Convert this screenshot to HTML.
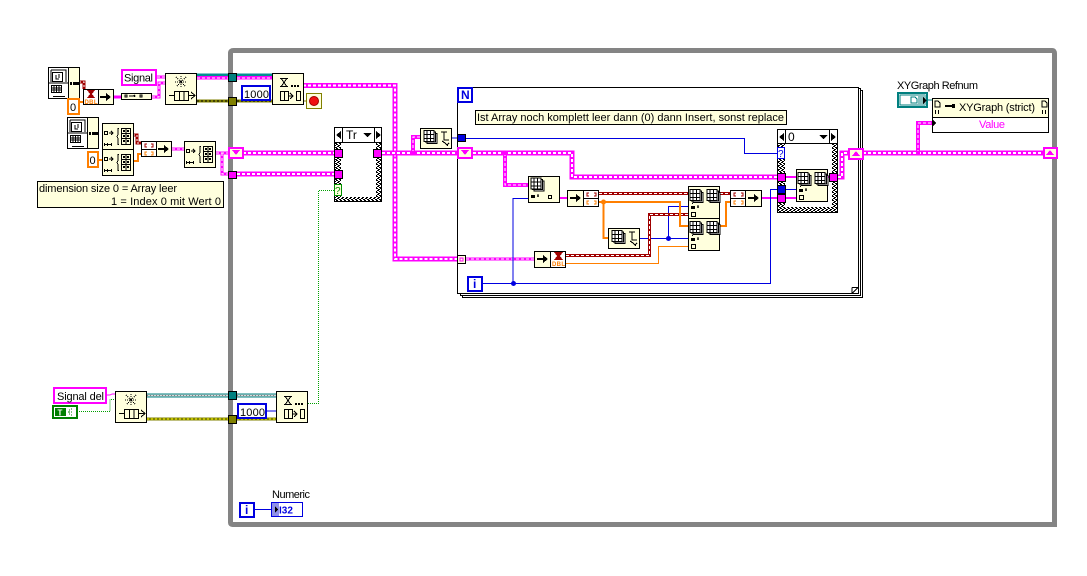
<!DOCTYPE html>
<html><head><meta charset="utf-8"><title>Block Diagram</title>
<style>
html,body{margin:0;padding:0;background:#fff;width:1087px;height:576px;overflow:hidden}
svg{display:block}
text{font-family:"Liberation Sans",sans-serif;font-size:11px;fill:#000}
.n{fill:#ffffdd;stroke:#000;stroke-width:1}
.pk{fill:none;stroke:#ff00ff;stroke-width:5}
.pw{fill:none;stroke:#fff;stroke-width:2;stroke-dasharray:3 2}
.pt{fill:none;stroke:#fff;stroke-width:1;stroke-dasharray:3 2}
.bl{fill:none;stroke:#0000e0;stroke-width:1}
.ot{fill:none;stroke:#ff7f00;stroke-width:1}
.oT{fill:none;stroke:#ff7f00;stroke-width:2}
.rd{fill:none;stroke:#a00000;stroke-width:3}
.rw{fill:none;stroke:#fff;stroke-width:1;stroke-dasharray:3 2}
.ic{fill:none;stroke:#000;stroke-width:1}
</style></head><body>
<svg width="1087" height="576" viewBox="0 0 1087 576" xmlns="http://www.w3.org/2000/svg" shape-rendering="crispEdges">
<defs>
<pattern id="chk" width="4" height="4" patternUnits="userSpaceOnUse"><rect width="4" height="4" fill="#fff"/><rect width="2" height="1" fill="#000"/><rect x="2" y="1" width="2" height="1" fill="#000"/><rect x="1" y="2" width="2" height="1" fill="#000"/><rect x="0" y="3" width="1" height="1" fill="#000"/><rect x="3" y="3" width="1" height="1" fill="#000"/></pattern>
<g id="pc"><rect x=".5" y=".5" width="31" height="31" class="n"/><path d="M1 1h19v30H1z" fill="#fff"/><path class="ic" d="M20.500 .5V31.500M3 3h15v12M3 3v12M1 16h19M5 29.500h12"/><rect x="4.500" y="5.500" width="10" height="9" fill="#fff" stroke="#000"/><path class="ic" d="M8 8v4h3M11 7v4"/><path class="ic" d="M3.500 18.500h10v7h-10zM3.500 21h10M3.500 23h10M6 18.500v7M8.500 18.500v7M11 18.500v7"/><path d="M22 15h2v3h-2zM25 15h6v3h-6z" fill="#000"/></g>
<g id="q"><rect x=".5" y=".5" width="31" height="31" class="n"/><path stroke-dasharray="1 1" class="ic" d="M16 3v12M10 9h12M11 4l10 10M21 4l-10 10"/><path class="ic" d="M4 22.500h6M24 22.500h5M26 19l4 3.500-4 3.500"/><path class="ic" d="M9.500 18.500h14v9h-14zM14.500 18.500v9M19 18.500v9"/></g>
<g id="dq"><rect x=".5" y=".5" width="31" height="31" class="n"/><path class="ic" d="M8 5.500h8M8 13.500h8M9.500 6l5 7M14.500 6l-5 7"/><path d="M19 12h2v2h-2zM22 12h2v2h-2zM25 12h2v2h-2z" fill="#000"/><path class="ic" d="M8.500 18.500h8v9h-8zM12.500 18.500v9M17 23h3M18 20l3 3-3 3M24.500 18.500h4v9h-4z"/></g>
<g id="ar"><rect x=".5" y=".5" width="31" height="26" class="n"/><rect x="2.500" y="8.500" width="3" height="3" fill="none" stroke="#000"/><path d="M7 10h3M9 8l2 2-2 2" fill="none" stroke="#000"/><path class="ic" d="M2 21.500h8M2.500 20v3M5.500 20v3M9.500 20v3M17 5.500h-1v6l-1 2 1 2v6h1"/><path class="ic" d="M19.500 5.500h9v16h-9zM19.500 10.500h9M19.500 15.500h9M24 5.500v16"/><rect x="21" y="7" width="2" height="2"/><rect x="25" y="7" width="2" height="2"/><rect x="21" y="12" width="2" height="2"/><rect x="25" y="12" width="2" height="2"/><rect x="21" y="17" width="2" height="2"/><rect x="25" y="17" width="2" height="2"/></g>
<g id="grid"><path d="M5 3h10v10H5z" fill="#fff" stroke="#000" transform="translate(3 3)"/><path d="M5 3h10v10H5z" fill="#fff" stroke="#000" transform="translate(1.500 1.500)"/><path d="M5 3h10v11H5zM5 7h10M5 11h10M8 3v11M11.500 3v11" fill="#fff" stroke="#000"/></g>
<g id="rep"><rect x=".5" y=".5" width="31" height="32" class="n"/><use href="#grid" transform="translate(-3 .5)"/><use href="#grid" transform="translate(14 .5)"/><rect x="3" y="20" width="4" height="3"/><path d="M9 21h2M10 19v3" stroke="#000" fill="none"/><rect x="3.500" y="26.500" width="4" height="4" fill="none" stroke="#000"/><rect x="4" y="17" width="1" height="1"/></g>
<g id="wave"><rect x=".5" y=".5" width="31" height="20" class="n"/><use href="#grid" transform="translate(-1 -.5)"/><path class="ic" d="M21 4h6M24 4v8h5M22 13l3 2 3 3M27 17l2-2" /></g>
<g id="ins"><rect x=".5" y=".5" width="31" height="26" class="n"/><use href="#grid" transform="translate(-2 -1)"/><rect x="3" y="19" width="4" height="3"/><path stroke="#000" fill="none" d="M9 20h2M10 18v3"/><rect x="20.500" y="19.500" width="3" height="3" fill="none" stroke="#000"/></g>
<path id="fatarrow" d="M0 3h6V0l5 4-5 4V5H0z" fill="#000"/>
</defs>

<!-- while loop -->
<path d="M230.500 56v466.500q0 2 2 2H1057" fill="none" stroke="#848484" stroke-width="5" shape-rendering="auto"/>
<path d="M230.500 56v-3q0-2.500 3-2.500H1052q2.500 0 2.500 3V522" fill="none" stroke="#848484" stroke-width="5" shape-rendering="auto"/>

<!-- for-loop frames -->
<rect x="462.500" y="90.500" width="400" height="207" fill="#fff" stroke="#000"/>
<rect x="460.500" y="88.500" width="400" height="207" fill="#fff" stroke="#000"/>
<rect x="457.500" y="87.500" width="401" height="206" fill="#fff" stroke="#000"/>
<path d="M852 293.500 858.500 287V293.500z" fill="#fff" stroke="#000"/>
<path d="M852 287.500h6.500M852 287.500v6" stroke="#000" fill="none"/>

<!-- thin wires -->
<path d="M79 82h5v7" fill="none" stroke="#a00000" stroke-width="3"/>
<path d="M79 82h5v7" fill="none" stroke="#fff" stroke-dasharray="2 2"/>
<path class="oT" d="M79 102h5"/>
<path d="M133 135h4v8h5" fill="none" stroke="#a00000" stroke-width="3"/>
<path d="M133 135h4v8h5" fill="none" stroke="#fff" stroke-dasharray="2 2"/>
<path class="oT" d="M133 161h5v-7h4"/>
<path class="oT" d="M98 160h4"/>

<!-- wires top-left -->
<path class="pk" style="stroke-width:3" d="M114 97h7M152 97h7v-14h6"/>
<path class="pt" d="M152 97h7v-14h6"/>
<path class="pk" style="stroke-width:3" d="M157 77h8"/>
<path class="pt" d="M157 77h8"/>
<path class="pk" style="stroke-width:3" d="M172 149h12"/><path class="pt" d="M172 149h12"/>
<path class="pk" style="stroke-width:3" d="M216 153h12"/>
<path class="pk" style="stroke-width:3" d="M222 153v21h7"/>
<path class="pt" d="M222 153v21h7M216 153h12"/>
<path d="M197 74h31M237 74h35" stroke="#009090" stroke-width="1" fill="none"/>
<path d="M197 77h31M237 77h35" stroke="#ff00ff" stroke-width="5" fill="none"/>
<path d="M197 75h31M237 75h35" stroke="#009090" stroke-width="2" fill="none"/>
<path d="M197 78h31M237 78h35" stroke="#fff" stroke-dasharray="3 2" fill="none"/>
<path d="M197 101h31M237 101h35" stroke="#808000" stroke-width="3" fill="none"/>
<path d="M197 101h31M237 101h35" stroke="#000" stroke-dasharray="2 2" fill="none"/>
<path d="M303 101h3" stroke="#808000" fill="none"/>

<!-- big pink wires -->
<path class="pk" d="M303 85.500h92v173.500H457"/>
<path class="pw" d="M303 85.500h92v173.500H457"/>
<path class="pk" d="M243 153h91"/><path class="pw" d="M243 153h91"/>
<path class="pk" d="M237 174h99"/><path class="pw" d="M237 174h98"/>
<path class="pk" style="stroke-width:4" d="M342 174h15v-21h19"/><path class="pt" d="M342 174h15v-21h19"/>
<path class="pk" d="M382 153h75"/><path class="pw" d="M382 153h75"/>
<path class="pk" style="stroke-width:4" d="M413 153v-16h7"/><path class="pt" d="M413 153v-16h7"/>
<rect x="411" y="151" width="4" height="4" fill="#ff00ff"/>
<path class="pk" d="M473 153h99v24h205"/><path class="pw" d="M473 153h99v24h205"/>
<path class="pk" style="stroke-width:4" d="M505 153v32h23"/><path class="pt" d="M505 153v32h23"/>
<rect x="503" y="151" width="4" height="4" fill="#ff00ff"/>
<path class="pk" style="stroke-width:3" d="M466 259h68"/><path class="pt" d="M466 259h68"/>
<path class="pk" d="M838 177h4v-24h6"/><path class="pw" d="M838 177h4v-24h6"/>
<path class="pk" d="M863 153h180"/><path class="pw" d="M863 153h180"/>
<path class="pk" style="stroke-width:4" d="M918 153v-30h14"/><path class="pt" d="M918 153v-30h14"/>
<rect x="916" y="151" width="4" height="4" fill="#ff00ff"/>
<path class="pk" style="stroke-width:2" d="M559 198h8M762 198h15M786 198h10"/>
<path class="pk" style="stroke-width:2" d="M786 177h10M828 177h1"/>

<!-- blue wires -->
<path class="bl" d="M452 138h5M466 138.500h278.500v15H777"/>
<path class="bl" d="M528 198.500h-15V283.500M482 283.500h288.500V189.500H777"/>
<circle cx="513.500" cy="283.500" r="2.500" fill="#0000e0" shape-rendering="auto"/>
<path class="bl" d="M786 189.500h10M640 238.500h48M668.500 238.500V206.500H688"/>
<circle cx="668.500" cy="238.500" r="2.500" fill="#0000e0" shape-rendering="auto"/>
<path class="bl" d="M255 509.500h16M267 411h9"/>

<!-- red / orange -->
<path class="rd" d="M599 193.500h89M720 193.500h10"/><path class="rw" d="M599 193.500h89M720 193.500h10"/>
<path class="rd" d="M566 255.500h83.500V214.500H688"/><path class="rw" d="M566 255.500h83.500V214.500H688"/>
<path class="oT" d="M599 202h81v24h8M603.500 202v36h5"/>
<circle cx="603.500" cy="202" r="2.500" fill="#ff7f00" shape-rendering="auto"/>
<path class="oT" d="M720 226h6v-24h4"/>
<path class="ot" d="M566 263.500h92.500V246.500H688"/>

<!-- green dotted -->
<path d="M308 403.500h10.500V190.500H334" fill="none" stroke="#00a000" stroke-dasharray="1 1"/>
<path d="M77 411.500h33v-12h5" fill="none" stroke="#00a000" stroke-dasharray="1 1"/>
<path d="M107 395h3l2-1h3" fill="none" stroke="#ff00ff"/>
<!-- lower wires -->
<path d="M147 395.500h81M237 395.500h39" stroke="#007f7f" stroke-width="4" fill="none"/>
<path d="M147 395.500h81M237 395.500h39" stroke="#d8d8d8" stroke-width="2" fill="none"/>
<path d="M147 395.500h81M237 395.500h39" stroke="#808080" stroke-dasharray="1 2" stroke-width="1" fill="none"/>
<path d="M147 419h81M237 419h39" stroke="#808000" stroke-width="3" fill="none"/>
<path d="M147 419h81M237 419h39" stroke="#ffff00" stroke-dasharray="2 2" fill="none"/>

<!-- terminals on while -->
<rect x="228.500" y="73.500" width="8" height="8" fill="#007f7f" stroke="#000"/>
<rect x="228.500" y="97.500" width="8" height="8" fill="#808000" stroke="#000"/>
<rect x="228.500" y="171.500" width="8" height="7" fill="#ff00ff" stroke="#000"/>
<rect x="228.500" y="391.500" width="8" height="8" fill="#007f7f" stroke="#000"/>
<rect x="228.500" y="415.500" width="8" height="8" fill="#808000" stroke="#000"/>
<rect x="229" y="148" width="14" height="10" fill="#ffffdd" stroke="#ff00ff" stroke-width="2"/>
<path d="M232 150h8l-4 5z" fill="#ff00ff"/>

<!-- left nodes -->
<use href="#pc" x="48" y="67"/>
<rect x="68" y="99" width="11" height="15" fill="#fff" stroke="#ff7f00" stroke-width="2"/>
<text x="70" y="111" textLength="7">0</text>
<rect x="83.500" y="89.500" width="15" height="15" fill="#fff" stroke="#000"/>
<rect x="98.500" y="89.500" width="15" height="15" class="n"/>
<path d="M87 90h8l-3 4 3 4h-8l3-4z" fill="#a00000"/>
<text x="84.500" y="104" style="font-size:6px;font-weight:bold;fill:#ff7f00" textLength="13">DBL</text>
<use href="#fatarrow" x="100" y="93"/>
<rect x="121.500" y="93.500" width="30" height="6" fill="#ffffdd" stroke="#000"/>
<path class="ic" d="M125 95h2v2h-2zM129 96h6M134 95l1 1-1 1M140 95h2v2h-2z"/>
<rect x="122" y="70" width="34" height="15" fill="#fff" stroke="#ff00ff" stroke-width="2"/>
<text x="124" y="81.500" textLength="29">Signal</text>
<use href="#q" x="165" y="73"/>
<rect x="242" y="86" width="28" height="14" fill="#fff" stroke="#0000e0" stroke-width="2"/>
<text x="244" y="98" textLength="25">1000</text>
<use href="#dq" x="272" y="73"/>
<rect x="306.500" y="93.500" width="15" height="15" fill="#ffffdd" stroke="#808000"/>
<circle cx="314" cy="101" r="4.500" fill="#f01010" stroke="#a00000" shape-rendering="auto"/>

<use href="#pc" x="67" y="117"/>
<use href="#ar" x="102" y="123"/>
<use href="#ar" x="102" y="149"/>
<rect x="88" y="152" width="10" height="15" fill="#fff" stroke="#ff7f00" stroke-width="2"/>
<text x="89.500" y="164" textLength="7">0</text>
<rect x="141.500" y="141.500" width="15" height="15" fill="#fff" stroke="#000"/>
<rect x="156.500" y="141.500" width="15" height="15" class="n"/>
<path d="M141 149.500h16" stroke="#000"/>
<path d="M147 144h-2v3h2M151 144h2v3h-2" stroke="#a00000" fill="none"/>
<path d="M147 152h-2v3h2M151 152h2v3h-2" stroke="#ff7f00" fill="none"/>
<use href="#fatarrow" x="158" y="145"/>
<use href="#ar" x="184" y="141"/>
<rect x="37.500" y="181.500" width="186" height="26" fill="#ffffdd" stroke="#000"/>
<text x="39" y="192" textLength="138">dimension size 0 = Array leer</text>
<text x="111" y="205" textLength="110">1 = Index 0 mit Wert 0</text>

<!-- case 1 -->
<rect x="334.500" y="127.500" width="47" height="74" fill="url(#chk)" stroke="#000"/>
<rect x="341" y="143" width="35" height="54" fill="#fff"/>
<rect x="334.500" y="127.500" width="47" height="15" fill="#fff" stroke="#000"/>
<path d="M342.500 128v14M374.500 128v14" stroke="#000"/>
<path d="M341 131v8l-5-4zM376 131v8l5-4zM363 133h9l-4.500 4z" fill="#000"/>
<text x="346" y="139" style="font-size:12px">Tr</text>
<rect x="334.500" y="149.500" width="8" height="8" fill="#ff00ff" stroke="#000"/>
<rect x="334.500" y="170.500" width="8" height="8" fill="#ff00ff" stroke="#000"/>
<rect x="373.500" y="149.500" width="8" height="8" fill="#ff00ff" stroke="#000"/>
<rect x="334.500" y="184.500" width="7" height="11" fill="#ffffdd" stroke="#009000"/>
<text x="335" y="194" style="font-size:10px;fill:#009000">?</text>

<!-- for loop contents -->
<rect x="458" y="88" width="14" height="14" fill="#fff" stroke="#0000e0" stroke-width="2"/>
<text x="461" y="99" style="font-size:12px;font-weight:bold;fill:#0000e0">N</text>
<rect x="457.500" y="134.500" width="8" height="7" fill="#0000e0" stroke="#000"/>
<rect x="458" y="148" width="14" height="10" fill="#ffffdd" stroke="#ff00ff" stroke-width="2"/>
<path d="M461 150h8l-4 5z" fill="#ff00ff"/>
<rect x="457.500" y="255.500" width="8" height="8" fill="#ffffdd" stroke="#000"/>
<rect x="460" y="258" width="3" height="3" fill="none" stroke="#ff00ff"/>
<rect x="468" y="277" width="14" height="14" fill="#fff" stroke="#0000e0" stroke-width="2"/>
<text x="473" y="288" style="font-size:12px;font-weight:bold;fill:#0000e0">i</text>
<rect x="475.500" y="110.500" width="311" height="14" fill="#ffffdd" stroke="#000"/>
<text x="477" y="121" textLength="307">Ist Array noch komplett leer dann (0) dann Insert, sonst replace</text>
<use href="#wave" x="420" y="128"/>
<use href="#ins" x="528" y="176"/>
<rect x="567.500" y="190.500" width="16" height="16" class="n"/>
<use href="#fatarrow" x="570" y="194"/>
<rect x="583.500" y="190.500" width="15" height="16" fill="#fff" stroke="#000"/>
<path d="M583 198.500h16" stroke="#000"/>
<path d="M589 193h-2v3h2M594 193h2v3h-2" stroke="#a00000" fill="none"/>
<path d="M589 201h-2v3h2M594 201h2v3h-2" stroke="#ff7f00" fill="none"/>
<rect x="534.500" y="251.500" width="16" height="16" class="n"/>
<use href="#fatarrow" x="537" y="255"/>
<rect x="550.500" y="251.500" width="15" height="16" fill="#fff" stroke="#000"/>
<path d="M554 252h9l-3 4 3 4h-9l3-4z" fill="#a00000"/>
<text x="552" y="266" style="font-size:6px;font-weight:bold;fill:#ff7f00" textLength="13">DBL</text>
<use href="#wave" x="608" y="228"/>
<use href="#rep" x="688" y="186"/>
<use href="#rep" x="688" y="218"/>
<rect x="730.500" y="190.500" width="15" height="16" fill="#fff" stroke="#000"/>
<rect x="745.500" y="190.500" width="16" height="16" class="n"/>
<path d="M730 198.500h16" stroke="#000"/>
<path d="M736 193h-2v3h2M741 193h2v3h-2" stroke="#a00000" fill="none"/>
<path d="M736 201h-2v3h2M741 201h2v3h-2" stroke="#ff7f00" fill="none"/>
<use href="#fatarrow" x="748" y="194"/>

<!-- case 2 -->
<rect x="777.500" y="129.500" width="60" height="83" fill="url(#chk)" stroke="#000"/>
<rect x="785" y="144" width="47" height="63" fill="#fff"/>
<path class="bl" d="M786 189.500h10"/>
<path class="pk" style="stroke-width:2" d="M786 177h10M786 198h10M828 177h1"/>
<rect x="777.500" y="129.500" width="60" height="14" fill="#fff" stroke="#000"/>
<path d="M785.500 130v14M829.500 130v14" stroke="#000"/>
<path d="M784 133v8l-5-4zM831 133v8l5-4zM819 135h9l-4.500 4z" fill="#000"/>
<text x="788" y="141" style="font-size:12px">0</text>
<rect x="777.500" y="147.500" width="7" height="11" fill="#fff" stroke="#0000e0"/>
<text x="778" y="157" style="font-size:10px;fill:#0000e0">?</text>
<rect x="777.500" y="173.500" width="8" height="8" fill="#ff00ff" stroke="#000"/>
<rect x="777.500" y="185.500" width="8" height="8" fill="#0000e0" stroke="#000"/>
<rect x="777.500" y="194.500" width="8" height="8" fill="#ff00ff" stroke="#000"/>
<use href="#rep" x="796" y="169"/>
<rect x="829.500" y="173.500" width="8" height="8" fill="#ff00ff" stroke="#000"/>
<rect x="849" y="149" width="14" height="10" fill="#ffffdd" stroke="#ff00ff" stroke-width="2"/>
<path d="M852 156h8l-4-5z" fill="#ff00ff"/>
<rect x="1044" y="148" width="13" height="10" fill="#ffffdd" stroke="#ff00ff" stroke-width="2"/>
<path d="M1046 155h8l-4-5z" fill="#ff00ff"/>

<!-- refnum & property node -->
<text x="897" y="89" textLength="81">XYGraph Refnum</text>
<rect x="898" y="93" width="29" height="14" fill="#fff" stroke="#007f7f" stroke-width="2"/>
<rect x="900" y="95" width="25" height="10" fill="#fff" stroke="#007f7f"/>
<rect x="918" y="95" width="7" height="10" fill="#88c0c0"/>
<path d="M911 97h4l2 2v4h-6z" fill="#fff" stroke="#007f7f"/>
<path d="M923 97v7l4-3.500z" fill="#000"/>
<path d="M928 100h4" stroke="#007f7f"/>
<rect x="932.500" y="98.500" width="116" height="34" fill="#ffffdd" stroke="#000"/>
<rect x="933" y="117" width="115" height="15" fill="#fff"/>
<path d="M932 117.500h117" stroke="#000"/>
<path d="M935 101h3l2 2v4h-5zM1042 101h3l2 2v4h-5z" fill="none" stroke="#000"/>
<path d="M935 110h1v4h-1zM938 110h1v4h-1zM1042 110h1v4h-1zM1045 110h1v4h-1z" fill="#000"/>
<path d="M945 105h7v2h-7zM952 104h3v4h-3z" fill="#000"/>
<text x="959" y="111" textLength="76">XYGraph (strict)</text>
<path d="M933 120v6l3-3z" fill="#000"/>
<text x="979" y="128" style="fill:#ff00ff" textLength="26">Value</text>

<!-- bottom-left -->
<rect x="54" y="388" width="52" height="15" fill="#fff" stroke="#ff00ff" stroke-width="2"/>
<text x="57" y="400" textLength="47">Signal del</text>
<rect x="53" y="406" width="24" height="12" fill="#fff" stroke="#007f00" stroke-width="2"/>
<rect x="55" y="408" width="11" height="8" fill="#007f00"/>
<text x="57.500" y="415.500" style="font-size:8px;font-weight:bold;fill:#fff">T</text>
<path d="M69 410h1M71 409h1M68 412h2M71 412h1M69 414h1M71 415h1" stroke="#007f00"/>
<use href="#q" x="115" y="391"/>
<rect x="238" y="404" width="28" height="14" fill="#fff" stroke="#0000e0" stroke-width="2"/>
<text x="240" y="416" textLength="25">1000</text>
<use href="#dq" x="276" y="391"/>
<rect x="240" y="503" width="14" height="14" fill="#fff" stroke="#0000e0" stroke-width="2"/>
<text x="245" y="514" style="font-size:12px;font-weight:bold;fill:#0000e0">i</text>
<text x="272" y="498" textLength="38">Numeric</text>
<rect x="271.500" y="502.500" width="31" height="14" fill="#fff" stroke="#0000e0"/>
<rect x="272" y="503" width="7" height="13" fill="#9090e8"/>
<path d="M275 506v7l3-3.500z" fill="#000"/>
<text x="279" y="513.500" style="font-size:10px;font-weight:bold;fill:#0000e0">I32</text>
</svg>
</body></html>
